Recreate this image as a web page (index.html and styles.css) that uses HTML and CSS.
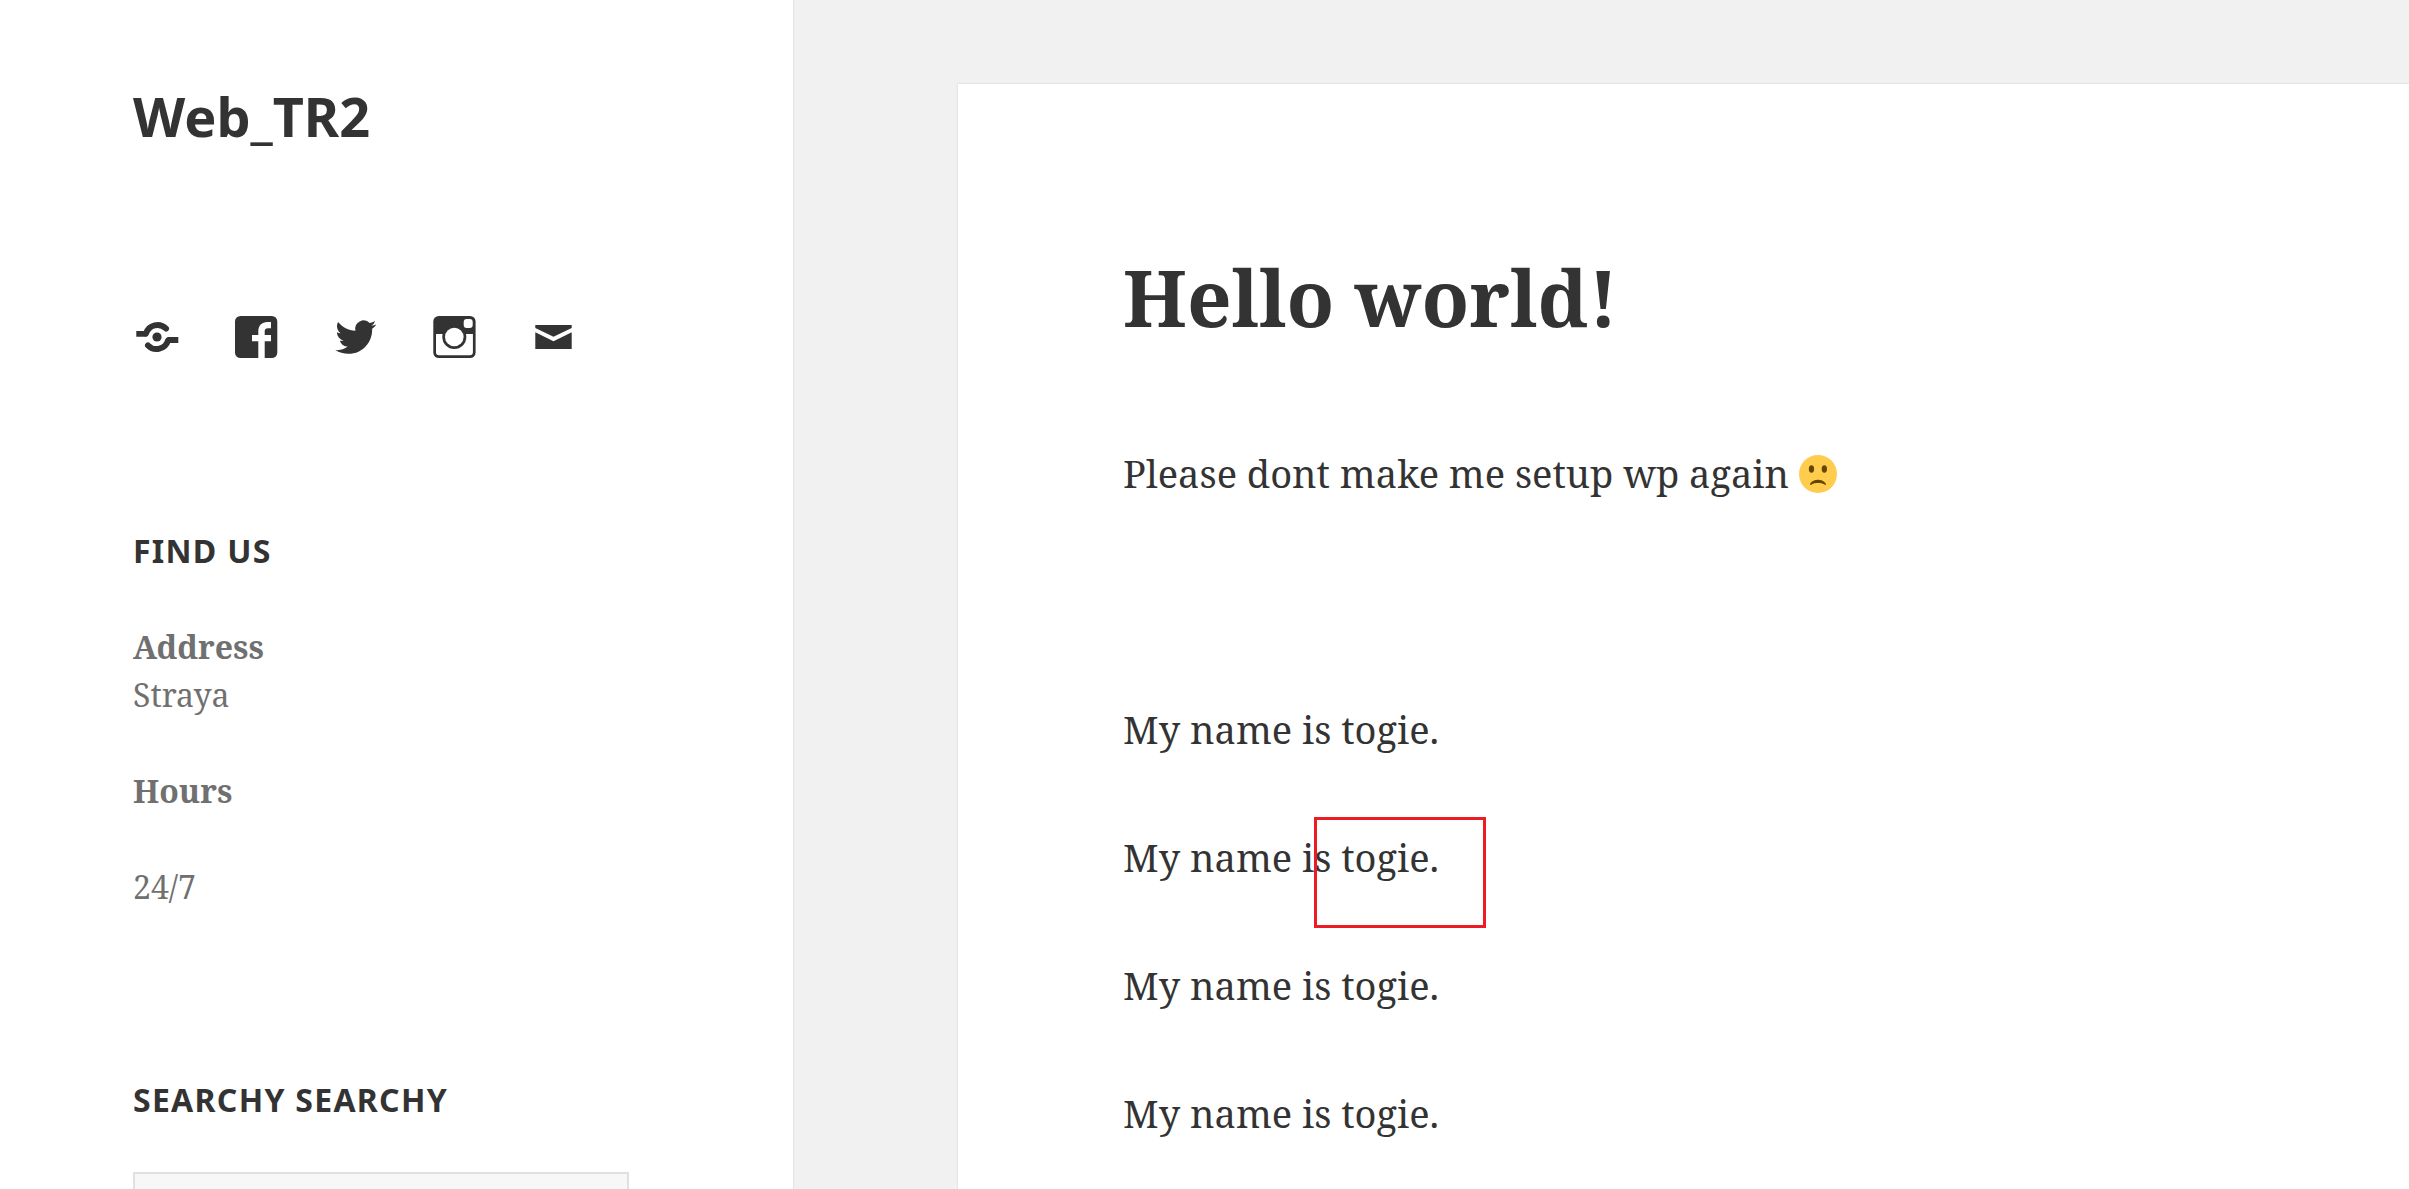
FILE: index.html
```html
<!DOCTYPE html>
<html lang="en">
<head>
<meta charset="utf-8">
<meta name="viewport" content="width=device-width, initial-scale=1">
<title>Hello world! – Web_TR2</title>
<link rel="stylesheet" href="styles.css">
</head>
<body>
<div class="site">
  <aside class="sidebar">
    <p class="site-title"><a href="#">Web_TR2</a></p>
    <nav class="social" aria-label="Social links">
      <a href="#" aria-label="Link">
        <svg viewBox="0 0 48 48"><circle cx="24" cy="24" r="4.6"/><path d="M3.3 18H15l-1.5 5.8H3.3zM45.3 30H33l1.500-6h10.800z"/><path class="stroke" d="M13 20.500A12 12 0 0 1 33 15.500M35 27.500A12 12 0 0 1 15 32.500"/></svg>
      </a>
      <a href="#" aria-label="Facebook">
        <svg viewBox="0 0 48 48"><rect x="3" y="3" width="42.3" height="42" rx="5.5"/><path class="cut" d="M26.3 45.5V28.3H20V22h6.3v-3.500c0-6 3.500-9.500 9.200-9.500H39v6.300h-3c-2.300 0-3.300 1-3.300 3V22H39v6.300h-6.300v17.200z"/></svg>
      </a>
      <a href="#" aria-label="Twitter">
        <svg viewBox="0 0 48 48"><path transform="translate(4.3 3.6) scale(1.71)" d="M23.953 4.57a10 10 0 01-2.825.775 4.958 4.958 0 002.163-2.723c-.951.555-2.005.959-3.127 1.184a4.92 4.92 0 00-8.384 4.482C7.69 8.095 4.067 6.13 1.64 3.162a4.822 4.822 0 00-.666 2.475c0 1.71.87 3.213 2.188 4.096a4.904 4.904 0 01-2.228-.616v.06a4.923 4.923 0 003.946 4.827 4.996 4.996 0 01-2.212.085 4.936 4.936 0 004.604 3.417 9.867 9.867 0 01-6.102 2.105c-.39 0-.779-.023-1.17-.067a13.995 13.995 0 007.557 2.209c9.053 0 13.998-7.496 13.998-13.985 0-.21 0-.42-.015-.63A9.935 9.935 0 0024 4.59z"/></svg>
      </a>
      <a href="#" aria-label="Instagram">
        <svg viewBox="0 0 48 48"><rect x="3.3" y="3" width="42.3" height="42" rx="5.5"/><path class="cut" d="M6 21h36.900v18.300a3 3 0 0 1-3 3H9a3 3 0 0 1-3-3z"/><circle cx="24.3" cy="24" r="12"/><circle class="cut" cx="24.3" cy="24" r="9.3"/><rect class="cut" x="33.7" y="6" width="9" height="9" rx="3"/></svg>
      </a>
      <a href="#" aria-label="Email">
        <svg viewBox="0 0 48 48"><path d="M6.300 12h36.400v3L24.500 23.800 6.300 15zM6.300 19.300l18.200 9 18.200-9V36H6.300z"/></svg>
      </a>
    </nav>
    <section class="widget">
      <h2 class="widget-title">Find Us</h2>
      <p><strong>Address</strong><br>Straya</p>
      <p><strong>Hours</strong></p>
      <p>24/7</p>
    </section>
    <section class="widget">
      <h2 class="widget-title"><label for="search">Searchy Searchy</label></h2>
      <input class="search" id="search" type="search">
    </section>
  </aside>
  <main class="content">
    <article class="post">
      <h1 class="post-title">Hello world!</h1>
      <p>Please dont make me setup wp again <svg class="emoji" viewBox="0 0 36 36" role="img" aria-label="frowning face"><circle cx="18" cy="18" r="18" fill="#ffcc4d"/><ellipse cx="11.8" cy="13.3" rx="2.5" ry="3.5" fill="#664500"/><ellipse cx="24" cy="13.3" rx="2.5" ry="3.5" fill="#664500"/><path fill="#664500" d="M25.485 27.879C25.44 27.7 24.317 23.5 18 23.5s-7.44 4.2-7.485 4.379c-.055.217.043.442.237.554.195.109.439.079.6-.077.019-.019 1.954-1.856 6.648-1.856s6.63 1.837 6.648 1.855c.096.095.224.145.352.145.084 0 .169-.021.246-.064.196-.112.294-.339.239-.557z"/></svg></p>
      <p>&nbsp;</p>
      <p>My name is togie.</p>
      <p class="marked">My name is togie.</p>
      <p>My name is togie.</p>
      <p>My name is togie.</p>
    </article>
  </main>
</div>
</body>
</html>
```
FILE: styles.css
```css
*,
*::after {
  box-sizing: border-box;
}

body {
  margin: 0;
  background: #f1f1f1;
  color: #333;
  font-family: "Noto Serif", "Liberation Serif", serif;
}

h1,
h2,
p {
  margin: 0;
}

a {
  color: inherit;
  text-decoration: none;
}

.site {
  display: grid;
  grid-template-columns: 32.92% 1fr;
  height: 100vh;
  overflow: hidden;
}

.sidebar {
  padding: 84px 164px 0 133px;
  background: #fff;
  box-shadow: 0 0 2px rgba(0, 0, 0, 0.15);
  color: #707070;
  font-size: 32px;
  line-height: 48px;
}

.site-title {
  color: #333;
  font: bold 54px/64px "Noto Sans", sans-serif;
}

.social {
  display: flex;
  gap: 51px;
  margin: 165px 0 166px;
}

.social svg {
  display: block;
  width: 48px;
  height: 48px;
  fill: #333;
}

.social .cut {
  fill: #fff;
}

.social .stroke {
  fill: none;
  stroke: #333;
  stroke-width: 6;
  stroke-linecap: round;
}

.widget {
  display: flex;
  flex-direction: column;
  gap: 48px;
  margin-bottom: 165px;
}

.widget-title {
  color: #333;
  font: bold 32px/48px "Noto Sans", sans-serif;
  letter-spacing: 0.04em;
  text-transform: uppercase;
}

.search {
  width: 100%;
  height: 76px;
  padding: 0 16px;
  border: 2px solid #e0e0e0;
  border-radius: 0;
  background: #f7f7f7;
  font: inherit;
  appearance: none;
}

.content {
  padding: 84px 0 0 165px;
}

.post {
  min-height: 100vh;
  padding: 165px;
  background: #fff;
  box-shadow: 0 0 2px rgba(0, 0, 0, 0.15);
  font-size: 38px;
  line-height: 64px;
}

.post p {
  margin-bottom: 64px;
}

.post-title {
  margin-bottom: 96px;
  font-size: 78px;
  line-height: 96px;
}

.emoji {
  width: 38px;
  height: 38px;
  vertical-align: -5px;
}

.marked {
  position: relative;
}

.marked::after {
  content: "";
  position: absolute;
  top: -8px;
  left: 191px;
  width: 172px;
  height: 111px;
  border: 3px solid #ed1c24;
}
```
